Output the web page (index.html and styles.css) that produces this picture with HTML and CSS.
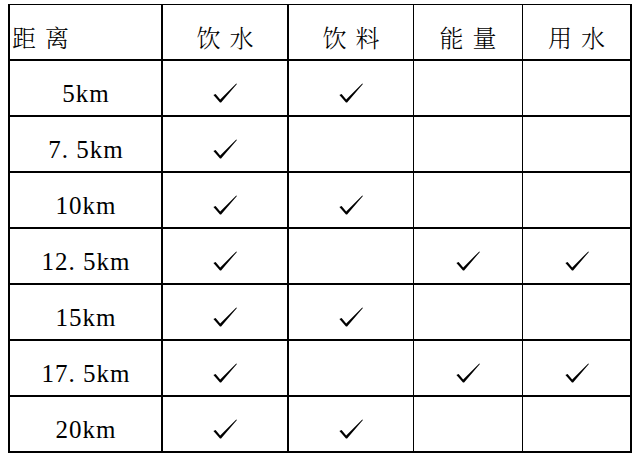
FILE: index.html
```html
<!DOCTYPE html>
<html>
<head>
<meta charset="utf-8">
<link rel="stylesheet" href="styles.css">
</head>
<body>
<table class="grid">
  <tr class="head">
    <td class="c1 cn left">距离</td>
    <td class="c2 cn">饮水</td>
    <td class="c3 cn">饮料</td>
    <td class="c4 cn">能量</td>
    <td class="c5 cn">用水</td>
  </tr>
  <tr>
    <td class="num">5km</td>
    <td><svg class="chk" viewBox="0 0 24 20"><path d="M0.4 12.1 L2.6 10.9 L7.2 16.4 L23.3 0.4 L23.9 0.9 L8.1 19.6 L7.0 19.6 Z"/></svg></td>
    <td><svg class="chk" viewBox="0 0 24 20"><path d="M0.4 12.1 L2.6 10.9 L7.2 16.4 L23.3 0.4 L23.9 0.9 L8.1 19.6 L7.0 19.6 Z"/></svg></td>
    <td></td>
    <td></td>
  </tr>
  <tr>
    <td class="num">7. 5km</td>
    <td><svg class="chk" viewBox="0 0 24 20"><path d="M0.4 12.1 L2.6 10.9 L7.2 16.4 L23.3 0.4 L23.9 0.9 L8.1 19.6 L7.0 19.6 Z"/></svg></td>
    <td></td>
    <td></td>
    <td></td>
  </tr>
  <tr>
    <td class="num">10km</td>
    <td><svg class="chk" viewBox="0 0 24 20"><path d="M0.4 12.1 L2.6 10.9 L7.2 16.4 L23.3 0.4 L23.9 0.9 L8.1 19.6 L7.0 19.6 Z"/></svg></td>
    <td><svg class="chk" viewBox="0 0 24 20"><path d="M0.4 12.1 L2.6 10.9 L7.2 16.4 L23.3 0.4 L23.9 0.9 L8.1 19.6 L7.0 19.6 Z"/></svg></td>
    <td></td>
    <td></td>
  </tr>
  <tr>
    <td class="num">12. 5km</td>
    <td><svg class="chk" viewBox="0 0 24 20"><path d="M0.4 12.1 L2.6 10.9 L7.2 16.4 L23.3 0.4 L23.9 0.9 L8.1 19.6 L7.0 19.6 Z"/></svg></td>
    <td></td>
    <td><svg class="chk" viewBox="0 0 24 20"><path d="M0.4 12.1 L2.6 10.9 L7.2 16.4 L23.3 0.4 L23.9 0.9 L8.1 19.6 L7.0 19.6 Z"/></svg></td>
    <td><svg class="chk" viewBox="0 0 24 20"><path d="M0.4 12.1 L2.6 10.9 L7.2 16.4 L23.3 0.4 L23.9 0.9 L8.1 19.6 L7.0 19.6 Z"/></svg></td>
  </tr>
  <tr>
    <td class="num">15km</td>
    <td><svg class="chk" viewBox="0 0 24 20"><path d="M0.4 12.1 L2.6 10.9 L7.2 16.4 L23.3 0.4 L23.9 0.9 L8.1 19.6 L7.0 19.6 Z"/></svg></td>
    <td><svg class="chk" viewBox="0 0 24 20"><path d="M0.4 12.1 L2.6 10.9 L7.2 16.4 L23.3 0.4 L23.9 0.9 L8.1 19.6 L7.0 19.6 Z"/></svg></td>
    <td></td>
    <td></td>
  </tr>
  <tr>
    <td class="num">17. 5km</td>
    <td><svg class="chk" viewBox="0 0 24 20"><path d="M0.4 12.1 L2.6 10.9 L7.2 16.4 L23.3 0.4 L23.9 0.9 L8.1 19.6 L7.0 19.6 Z"/></svg></td>
    <td></td>
    <td><svg class="chk" viewBox="0 0 24 20"><path d="M0.4 12.1 L2.6 10.9 L7.2 16.4 L23.3 0.4 L23.9 0.9 L8.1 19.6 L7.0 19.6 Z"/></svg></td>
    <td><svg class="chk" viewBox="0 0 24 20"><path d="M0.4 12.1 L2.6 10.9 L7.2 16.4 L23.3 0.4 L23.9 0.9 L8.1 19.6 L7.0 19.6 Z"/></svg></td>
  </tr>
  <tr>
    <td class="num">20km</td>
    <td><svg class="chk" viewBox="0 0 24 20"><path d="M0.4 12.1 L2.6 10.9 L7.2 16.4 L23.3 0.4 L23.9 0.9 L8.1 19.6 L7.0 19.6 Z"/></svg></td>
    <td><svg class="chk" viewBox="0 0 24 20"><path d="M0.4 12.1 L2.6 10.9 L7.2 16.4 L23.3 0.4 L23.9 0.9 L8.1 19.6 L7.0 19.6 Z"/></svg></td>
    <td></td>
    <td></td>
  </tr>
</table>
</body>
</html>
```

FILE: styles.css
```css
html, body {
  margin: 0;
  padding: 0;
  background: #ffffff;
}
body {
  font-family: "Liberation Serif", "Noto Serif CJK SC", "Noto Sans CJK SC", serif;
  color: #000000;
}
.grid {
  margin: 4px 0 0 8px;
  border-collapse: separate;
  border-spacing: 0;
  table-layout: fixed;
  width: 624px;
  border-left: 2px solid #000;
  border-top: 1px solid #000;
}
.grid td {
  box-sizing: border-box;
  height: 56px;
  padding: 10px 0 0 0;
  border-right: 2px solid #000;
  border-bottom: 2px solid #000;
  text-align: center;
  vertical-align: middle;
  line-height: 1;
}
.grid td:nth-child(3) { border-right-width: 1px; }
.grid td:nth-child(4) { border-right-width: 1px; }
.c1 { width: 153px; }
.c2 { width: 126px; }
.c3 { width: 125px; }
.c4 { width: 109px; }
.c5 { width: 109px; }
.cn {
  font-family: "Noto Serif CJK SC", "Noto Sans CJK SC", sans-serif;
  font-size: 24px;
  font-weight: 300;
  letter-spacing: 9px;
  padding-left: 9px !important;
}
.cn.left {
  text-align: left;
  padding-left: 2px !important;
}
.num {
  font-size: 25px;
  letter-spacing: 1px;
  padding-left: 1px !important;
}
.chk {
  display: inline-block;
  width: 24px;
  height: 20px;
  vertical-align: middle;
  fill: #000;
}
```
